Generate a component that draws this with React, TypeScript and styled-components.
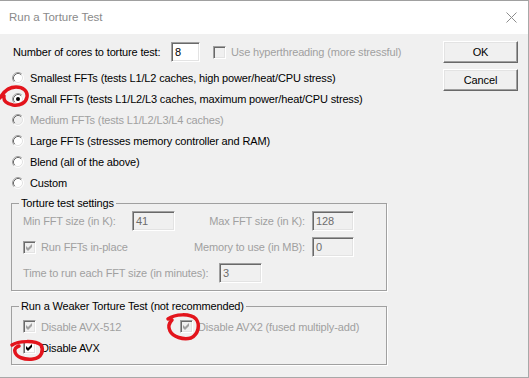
import styled, { createGlobalStyle } from 'styled-components';

const GlobalStyle = createGlobalStyle`
  body {
    margin: 0;
    background: #ffffff;
    font-family: "Liberation Sans", Arial, sans-serif;
    font-size: 11px;
    letter-spacing: -0.15px;
    color: #000;
  }
`;

const DISABLED = '#a0a0a0';

const Radio = ({ checked = false, disabled = false }) => (
  <RadioBox width="12" height="12" viewBox="0 0 12 12">
    <circle cx="6" cy="6" r="5" fill={disabled ? '#f0f0f0' : '#fff'} />
    <path d="M2.11 9.89 A5.5 5.5 0 0 1 9.89 2.11" fill="none" stroke="#a0a0a0" />
    <path d="M2.82 9.18 A4.5 4.5 0 0 1 9.18 2.82" fill="none" stroke="#696969" />
    <path d="M9.89 2.11 A5.5 5.5 0 0 1 2.11 9.89" fill="none" stroke="#fff" />
    <path d="M9.18 2.82 A4.5 4.5 0 0 1 2.82 9.18" fill="none" stroke="#e3e3e3" />
    {checked && <circle cx="6" cy="6" r="2" fill={disabled ? DISABLED : '#000'} />}
  </RadioBox>
);

const Check = ({ checked = false, disabled = false }) => (
  <CheckBox $disabled={disabled}>
    {checked && (
      <svg width="7" height="7" viewBox="0 0 7 7">
        <polygon points="0,2 2,4 6,0 6,3 2,7 0,5" fill={disabled ? DISABLED : '#000'} />
      </svg>
    )}
  </CheckBox>
);

const App = () => {
  return (
    <>
      <GlobalStyle />
      <Window>
        <TitleBar>
          <TitleText>Run a Torture Test</TitleText>
          <svg width="11" height="11" viewBox="0 0 11 11">
            <path d="M0.5 0.5 L10.5 10.5 M10.5 0.5 L0.5 10.5" stroke="#8c8c8c" strokeWidth="1" />
          </svg>
        </TitleBar>
        <Body>
          <Main>
            <CoresRow>
              <Label $width={158}>Number of cores to torture test:</Label>
              <Edit $width={29}>8</Edit>
              <CheckItem $offset={13}>
                <Check disabled />
                <Label $disabled>Use hyperthreading (more stressful)</Label>
              </CheckItem>
            </CoresRow>
            <RadioList>
              <RadioRow>
                <Radio />
                <Label>Smallest FFTs (tests L1/L2 caches, high power/heat/CPU stress)</Label>
              </RadioRow>
              <RadioRow>
                <Radio checked />
                <Label>Small FFTs (tests L1/L2/L3 caches, maximum power/heat/CPU stress)</Label>
              </RadioRow>
              <RadioRow>
                <Radio disabled />
                <Label $disabled>Medium FFTs (tests L1/L2/L3/L4 caches)</Label>
              </RadioRow>
              <RadioRow>
                <Radio />
                <Label>Large FFTs (stresses memory controller and RAM)</Label>
              </RadioRow>
              <RadioRow>
                <Radio />
                <Label>Blend (all of the above)</Label>
              </RadioRow>
              <RadioRow>
                <Radio />
                <Label>Custom</Label>
              </RadioRow>
            </RadioList>

            <GroupBox>
              <Legend>Torture test settings</Legend>
              <SettingsGrid>
                <Label $disabled>Min FFT size (in K):</Label>
                <Edit $width={43} $disabled>41</Edit>
                <RightLabel $disabled>Max FFT size (in K):</RightLabel>
                <Edit $width={42} $disabled>128</Edit>

                <CheckItem>
                  <Check checked disabled />
                  <Label $disabled>Run FFTs in-place</Label>
                </CheckItem>
                <span />
                <RightLabel $disabled>Memory to use (in MB):</RightLabel>
                <Edit $width={42} $disabled>0</Edit>
              </SettingsGrid>
              <TimeRow>
                <Label $width={196} $disabled>Time to run each FFT size (in minutes):</Label>
                <Edit $width={43} $disabled>3</Edit>
              </TimeRow>
            </GroupBox>

            <WeakGroup>
              <Legend>Run a Weaker Torture Test (not recommended)</Legend>
              <CheckRow>
                <CheckItem $width={157}>
                  <Check checked disabled />
                  <Label $disabled>Disable AVX-512</Label>
                </CheckItem>
                <CheckItem>
                  <Check checked disabled />
                  <Label $disabled>Disable AVX2 (fused multiply-add)</Label>
                </CheckItem>
              </CheckRow>
              <CheckRow>
                <CheckItem>
                  <Check checked />
                  <Label>Disable AVX</Label>
                </CheckItem>
              </CheckRow>
            </WeakGroup>
          </Main>
          <Side>
            <Button>OK</Button>
            <Button>Cancel</Button>
          </Side>
        </Body>

        <Marks width="529" height="378" viewBox="0 0 529 378">
          <path d="M0 97 C4 90 10 86 16 86 C23 86 28 90 27 96 C26 102 20 105 13 104 C7 103 3 100 4 95" />
          <path d="M168 318 C175 313 190 312 196 318 C200 323 199 333 191 337 C183 339 173 336 170 330 C168 326 169 322 172 319" />
          <path d="M12 344 C18 340 35 339 41 344 C44 349 42 357 33 358 C24 359 16 356 15 351 C14 348 16 346 19 345" />
        </Marks>
      </Window>
    </>
  );
};

const Window = styled.div`
  position: relative;
  width: 529px;
  height: 378px;
  box-sizing: border-box;
  display: flex;
  flex-direction: column;
  background: #f0f0f0;
  border-top: 1px solid #a0a0a0;
  border-right: 1px solid #a8a8a8;
  border-bottom: 1px solid #a8a8a8;
  overflow: hidden;
`;

const TitleBar = styled.div`
  height: 33px;
  flex: 0 0 33px;
  background: #fff;
  display: flex;
  align-items: center;
  justify-content: space-between;
  padding: 0 11px 0 9px;
`;

const TitleText = styled.span`
  font-size: 11.5px;
  letter-spacing: 0;
  color: #8a8a8a;
  margin-top: -2px;
`;

const Body = styled.div`
  flex: 1;
  display: flex;
  padding-top: 7px;
`;

const Main = styled.div`
  flex: 0 0 443px;
  padding-left: 11px;
  box-sizing: border-box;
  display: flex;
  flex-direction: column;
`;

const Side = styled.div`
  width: 75px;
  display: flex;
  flex-direction: column;
  gap: 6px;
`;

const Button = styled.div`
  height: 22px;
  box-sizing: border-box;
  display: flex;
  align-items: center;
  justify-content: center;
  border: 1px solid;
  border-color: #fff #696969 #696969 #fff;
  box-shadow: inset -1px -1px 0 #a0a0a0, inset 1px 1px 0 #e3e3e3;
  background: #f0f0f0;
`;

const Label = styled.span<{ $disabled?: boolean; $width?: number }>`
  color: ${(p) => (p.$disabled ? DISABLED : '#000')};
  white-space: nowrap;
  ${(p) => (p.$width ? `flex: 0 0 ${p.$width}px;` : '')}
`;

const RightLabel = styled(Label)`
  text-align: right;
  padding-right: 7px;
`;

const Edit = styled.div<{ $width: number; $disabled?: boolean }>`
  width: ${(p) => p.$width}px;
  height: 20px;
  box-sizing: border-box;
  padding-left: 3px;
  display: flex;
  align-items: center;
  border: 1px solid;
  border-color: #a0a0a0 #fff #fff #a0a0a0;
  box-shadow: inset 1px 1px 0 #696969, inset -1px -1px 0 #e3e3e3;
  background: ${(p) => (p.$disabled ? '#f0f0f0' : '#fff')};
  color: ${(p) => (p.$disabled ? '#6d6d6d' : '#000')};
`;

const CoresRow = styled.div`
  height: 22px;
  margin-left: 2px;
  display: flex;
  align-items: center;
`;

const CheckItem = styled.div<{ $offset?: number; $width?: number }>`
  display: flex;
  align-items: center;
  gap: 5px;
  ${(p) => (p.$offset ? `margin-left: ${p.$offset}px;` : '')}
  ${(p) => (p.$width ? `flex: 0 0 ${p.$width}px;` : '')}
`;

const CheckBox = styled.span<{ $disabled?: boolean }>`
  width: 13px;
  height: 13px;
  box-sizing: border-box;
  display: flex;
  align-items: center;
  justify-content: center;
  border: 1px solid;
  border-color: #a0a0a0 #fff #fff #a0a0a0;
  box-shadow: inset 1px 1px 0 #696969, inset -1px -1px 0 #e3e3e3;
  background: ${(p) => (p.$disabled ? '#f0f0f0' : '#fff')};
`;

const RadioBox = styled.svg`
  flex: 0 0 12px;
  margin-right: 6px;
`;

const RadioList = styled.div`
  margin-top: 4px;
  margin-left: 1px;
  display: flex;
  flex-direction: column;
`;

const RadioRow = styled.div`
  height: 21px;
  display: flex;
  align-items: center;
`;

const GroupBox = styled.fieldset`
  margin: 4px 0 0;
  width: 376px;
  box-sizing: border-box;
  padding: 0 0 6px 11px;
  border: 1px solid #a0a0a0;
  box-shadow: 1px 1px 0 #fff;
  display: flex;
  flex-direction: column;
  gap: 4px;
`;

const WeakGroup = styled(GroupBox)`
  margin-top: 9px;
  padding-top: 3px;
  gap: 0;
`;

const Legend = styled.legend`
  padding: 0 2px;
  margin-left: -4px;
  line-height: 13px;
  color: #000;
`;

const SettingsGrid = styled.div`
  display: grid;
  grid-template-columns: 109px 43px 137px 42px;
  grid-auto-rows: 22px;
  row-gap: 4px;
  align-items: center;
`;

const TimeRow = styled.div`
  height: 22px;
  display: flex;
  align-items: center;
`;

const CheckRow = styled.div`
  height: 21px;
  display: flex;
  align-items: center;
`;

const Marks = styled.svg`
  position: absolute;
  left: 0;
  top: 0;
  pointer-events: none;
  fill: none;
  stroke: #e3141c;
  stroke-width: 3.5;
  stroke-linecap: round;
`;

export default App;
